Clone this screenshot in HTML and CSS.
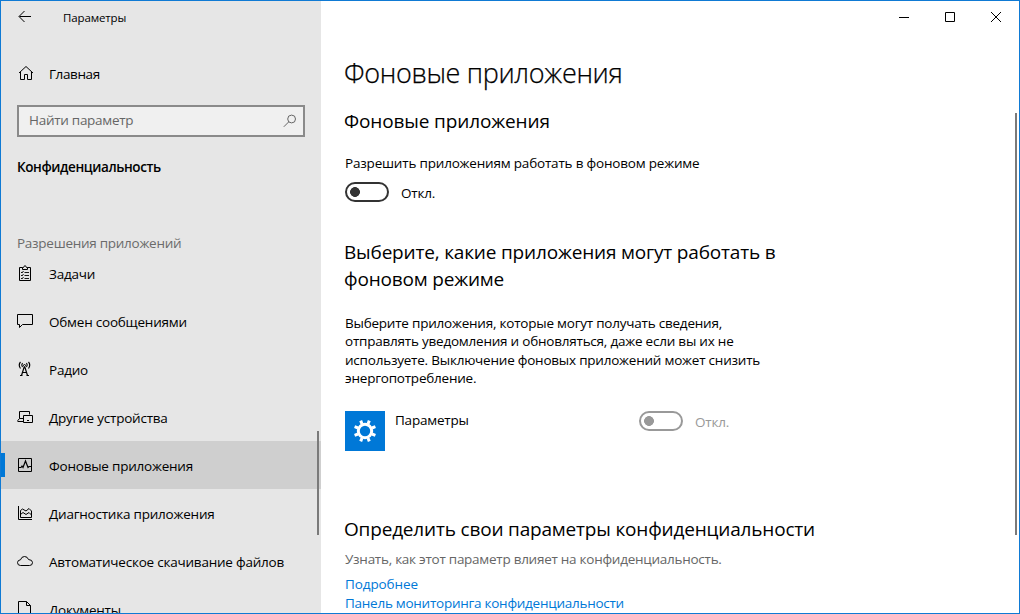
FILE: index.html
```
<!DOCTYPE html>
<html lang="ru">
<head>
<meta charset="utf-8">
<title>Параметры</title>
<link rel="stylesheet" href="styles.css">
</head>
<body>
<div class="window">
  <aside class="sidebar">
    <header class="titlebar">
      <svg class="back" width="14" height="14" viewBox="0 0 14 14"><path d="M13 6.500H1.500M6.500 1L1 6.500L6.500 12"/></svg>
      <span class="app-name">Параметры</span>
    </header>
    <a class="home">
      <svg class="icon" width="16" height="16" viewBox="0 0 16 16"><path d="M2 8L9 1.500L16 8M3.500 6.800V14.500H7.500V9.500H10.500V14.500H14.500V6.800"/></svg>
      <span>Главная</span>
    </a>
    <div class="search">
      <span>Найти параметр</span>
      <svg width="14" height="14" viewBox="0 0 14 14"><circle cx="8.6" cy="5" r="3.9"/><path d="M5.800 7.800L.8 12.800"/></svg>
    </div>
    <h2 class="category">Конфиденциальность</h2>
    <h3 class="group">Разрешения приложений</h3>
    <nav class="nav">
      <a class="item"><svg class="icon" width="16" height="16" viewBox="0 0 16 16"><path d="M5.500 2.500H2.500V15.500H13.500V2.500H10.500M5.500 4.500V2.500H6.500L7.500 .8H8.500L9.500 2.500H10.500V4.500Z"/><path class="thin" d="M7.500 7.500H12M7.500 10.500H12M7.500 13.500H12M4 7L5 8L6.500 6M4 10L5 11L6.500 9M4 13L5 14L6.500 12"/></svg><span>Задачи</span></a>
      <a class="item"><svg class="icon" width="16" height="16" viewBox="0 0 16 16"><path d="M.5 1.500H15.500V11.500H5.500L2.500 14.500V11.500H.5Z"/></svg><span>Обмен сообщениями</span></a>
      <a class="item"><svg class="icon" width="16" height="16" viewBox="0 0 16 16"><path class="bold" d="M4.500 14.500L7 6.500H8L10.500 14.500M5.500 11.500H9.500M3 14.500H5.500M9.500 14.500H12"/><path class="bold" d="M3.500 1Q1 4 3.500 7.500M5.500 2Q4 4 5.500 6M11.500 1Q14 4 11.500 7.500M9.500 2Q11 4 9.500 6"/><circle cx="7.500" cy="4.500" r="1"/></svg><span>Радио</span></a>
      <a class="item"><svg class="icon" width="16" height="16" viewBox="0 0 16 16"><path d="M12.500 5.500V2.500H2.500V9.500L.8 11.500V12.500H6M2.500 9.500H6M6.500 6.500H15.500V13.500H6.500Z"/><path d="M10 11.500H12"/></svg><span>Другие устройства</span></a>
      <a class="item active"><svg class="icon" width="16" height="16" viewBox="0 0 16 16"><path d="M1.500 1.500H14.500V14.500H1.500Z"/><path class="bold" d="M2 10.500H4L5 9L6 10.500L8.500 4L11 10.500L12 9.500H14"/></svg><span>Фоновые приложения</span></a>
      <a class="item"><svg class="icon" width="16" height="16" viewBox="0 0 16 16"><path d="M1.500 1V14.500H15"/><path d="M3.500 12.500V5.500L5.500 4L9 6L12 3.500L14.500 6V12.500ZM3.500 9.500L6 7.500L9 9.500L12 7.500L14.500 10"/></svg><span>Диагностика приложения</span></a>
      <a class="item"><svg class="icon" width="16" height="16" viewBox="0 0 16 16"><path d="M3.500 12.500Q.5 12.500 .5 9.500Q.7 7 3.500 6.800Q4.500 3.500 7.500 3.500Q10.500 3.500 11.500 6.500Q15.500 6.800 15.500 9.500Q15.500 12.500 12.500 12.500Z"/></svg><span>Автоматическое скачивание файлов</span></a>
      <a class="item"><svg class="icon" width="16" height="16" viewBox="0 0 16 16"><path d="M1.500 .5H9.500L13.500 4.500V15.500H1.500ZM9.500 .5V4.500H13.500"/></svg><span>Документы</span></a>
    </nav>
    <i class="scroll side-scroll"></i>
  </aside>
  <main class="content">
    <div class="controls">
      <svg width="10" height="10" viewBox="0 0 10 10"><path d="M0 5.500H10"/></svg>
      <svg width="10" height="10" viewBox="0 0 10 10"><path d="M.5 .5H9.500V9.500H.5Z"/></svg>
      <svg width="10" height="10" viewBox="0 0 10 10"><path d="M0 0L10 10M10 0L0 10"/></svg>
    </div>
    <h1>Фоновые приложения</h1>
    <h2 class="first">Фоновые приложения</h2>
    <p class="allow">Разрешить приложениям работать в фоновом режиме</p>
    <div class="switch"><i class="toggle"></i><span>Откл.</span></div>
    <h2 class="choose">Выберите, какие приложения могут работать в<br>фоновом режиме</h2>
    <p class="about">Выберите приложения, которые могут получать сведения,<br>отправлять уведомления и обновляться, даже если вы их не<br>используете. Выключение фоновых приложений может снизить<br>энергопотребление.</p>
    <div class="app">
      <div class="tile"><svg width="24" height="24" viewBox="-12 -12 24 24"><circle r="6.700"/><path d="M-4.300 -10.400L-3 -7M4.300 -10.400L3 -7M10.400 -4.300L7 -3M10.400 4.300L7 3M4.300 10.400L3 7M-4.300 10.400L-3 7M-10.400 4.300L-7 3M-10.400 -4.300L-7 -3"/></svg></div>
      <span class="app-title">Параметры</span>
      <div class="switch disabled"><i class="toggle"></i><span>Откл.</span></div>
    </div>
    <h2 class="define">Определить свои параметры конфиденциальности</h2>
    <p class="learn">Узнать, как этот параметр влияет на конфиденциальность.</p>
    <a class="link more">Подробнее</a>
    <a class="link dash">Панель мониторинга конфиденциальности</a>
    <i class="scroll main-scroll"></i>
  </main>
</div>
</body>
</html>
```
FILE: styles.css
```
* { box-sizing: border-box; }
body { margin: 0; font: 13.5px/20px "Open Sans", "Noto Sans", sans-serif; letter-spacing: -0.22px; color: #000; }
h1, h2, h3, p { margin: 0; font-weight: 400; white-space: nowrap; }
svg { display: block; flex: none; fill: none; stroke: #000; stroke-width: 1; overflow: visible; }
span { white-space: nowrap; }
.window { display: flex; width: 1020px; height: 614px; border: 1px solid #0f7ad4; background: #fff; overflow: hidden; }
.sidebar { position: relative; width: 320px; height: 612px; flex: none; background: #e6e6e6; overflow: hidden; }
.titlebar { display: flex; align-items: center; height: 32px; padding-left: 17px; font-size: 11.5px; letter-spacing: -0.13px; gap: 31px; }
.app-name, .home span, .item span { padding-top: 2px; }
.home { display: flex; align-items: center; height: 40px; margin-top: 20px; padding-left: 16px; gap: 16px; }
.home span { letter-spacing: -0.4px; }
.search { display: flex; align-items: center; justify-content: space-between; width: 288px; height: 32px; margin: 12px 0 0 16px; padding: 0 6px 0 10px; border: 2px solid #8a8a8a; background: #f0f0f0; color: #666; letter-spacing: -0.28px; }
.search span { margin-top: -2px; }
.search svg { stroke: #666; }
.category { margin: 20px 0 0 16px; font-size: 13.5px; line-height: 20px; font-weight: 600; letter-spacing: -0.4px; }
.group { margin: 56px 0 0 16px; font-size: 13.5px; line-height: 20px; color: #6b6b6b; letter-spacing: -0.27px; }
.nav { display: flex; flex-direction: column; margin-top: -4px; }
.item { display: flex; align-items: center; height: 48px; flex: none; padding-left: 16px; gap: 16px; }
.active { background: linear-gradient(#0078d7, #0078d7) 0 12px / 4px 24px no-repeat #cfcfcf; }
.thin { stroke-width: .9; }
.bold { stroke-width: 1.2; }
.scroll { position: absolute; width: 2px; background: #7a7a7a; }
.side-scroll { right: 2px; top: 430px; height: 104px; }
.main-scroll { right: 2px; top: 112px; height: 422px; }
.content { position: relative; flex: 1; padding-left: 24px; }
.controls { display: flex; justify-content: flex-end; align-items: center; height: 32px; padding-right: 18px; gap: 36px; }
h1 { margin: 20px 0 0 -1px; font-size: 27px; line-height: 40px; font-weight: 300; letter-spacing: -0.32px; -webkit-text-stroke: .25px #000; }
.content h2 { margin-left: -1px; font-size: 19px; line-height: 27px; letter-spacing: -0.18px; }
.content .first { margin-top: 15px; letter-spacing: -0.13px; }
.allow { margin-top: 18px; letter-spacing: -0.19px; }
.switch { display: flex; align-items: center; gap: 12px; }
.switch span { padding-top: 2px; }
.allow + .switch { margin-top: 8px; height: 22px; }
.toggle { width: 44px; height: 20px; border: 2px solid #333; border-radius: 10px; background: radial-gradient(circle 5px at 8px 8px, #333 4.6px, transparent 5.2px); }
.choose { margin-top: 36px; }
.about { margin-top: 21px; line-height: 18.4px; }
.app { display: flex; align-items: flex-start; height: 40px; margin-top: 23.4px; }
.tile { display: flex; align-items: center; justify-content: center; width: 40px; height: 40px; background: #0078d7; }
.tile svg { stroke: #fff; stroke-width: 3; }
.app-title { width: 244px; margin: -1px 0 0 10px; }
.disabled { color: #999; height: 20px; }
.disabled .toggle { border-color: #999; background: radial-gradient(circle 5px at 8px 8px, #999 4.6px, transparent 5.2px); }
.define { margin-top: 65px; }
.learn { margin-top: 6px; color: #666; letter-spacing: -0.26px; }
.link { display: block; color: #0078d7; letter-spacing: -0.26px; }
.more { margin-top: 5px; letter-spacing: -0.1px; }
.dash { margin-top: -1px; }
```
